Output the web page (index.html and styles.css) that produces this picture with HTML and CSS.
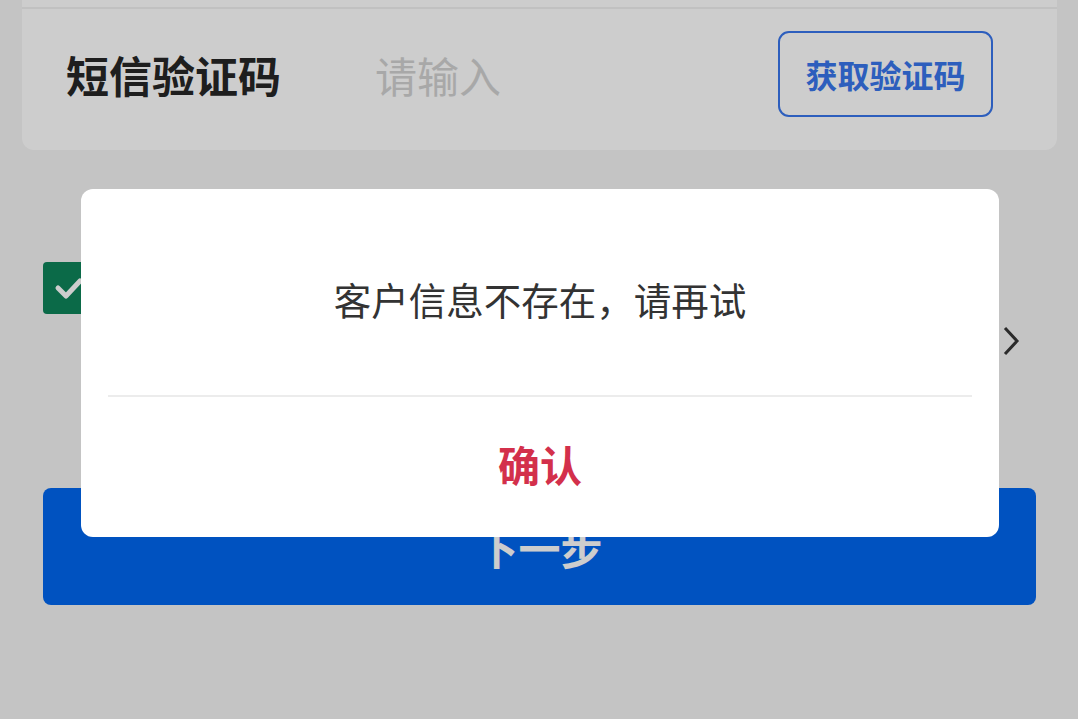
FILE: index.html
```html
<!DOCTYPE html>
<html lang="zh-CN">
<head>
    <meta charset="UTF-8">
    <meta name="viewport" content="width=device-width, initial-scale=1.0">
    <title>短信验证</title>
    <link rel="stylesheet" href="styles.css">
</head>
<body>
    <div class="page">
        <div class="form-card">
            <div class="form-row form-row-prev"></div>
            <div class="form-row sms-row">
                <label class="field-label" for="sms-code">短信验证码</label>
                <input id="sms-code" class="field-input" type="text" placeholder="请输入">
                <button class="code-btn">获取验证码</button>
            </div>
        </div>

        <div class="agree-row">
            <span class="agree-check">
                <svg width="30" height="24" viewBox="0 0 30 24">
                    <polyline points="4,12 12,20 26,5" fill="none" stroke="#fff" stroke-width="5" stroke-linecap="round" stroke-linejoin="round"/>
                </svg>
            </span>
            <span class="agree-text"></span>
            <svg class="agree-arrow" width="18" height="30" viewBox="0 0 18 30">
                <polyline points="3,2 15,15 3,28" fill="none" stroke="#363636" stroke-width="3"/>
            </svg>
        </div>

        <button class="next-btn">下一步</button>
    </div>

    <!-- alert dialog -->
    <div class="mask"></div>
    <div class="dialog">
        <div class="dialog-msg">客户信息不存在，请再试</div>
        <div class="dialog-line"></div>
        <button class="dialog-ok">确认</button>
    </div>
</body>
</html>
```

FILE: styles.css
```css
body {
    margin: 0;
    background-color: #f4f4f4;
    font-family: "Noto Sans CJK SC", "Noto Sans", sans-serif;
    height: 719px;
    overflow: hidden;
}

.page {
    padding: 0 21px 0 22px;
}

.form-card {
    background-color: #fff;
    border-radius: 0 0 12px 12px;
}

.form-row-prev {
    height: 7px;
    border-bottom: 2px solid #f0f0f0;
}

.sms-row {
    display: flex;
    align-items: center;
    padding: 22px 64px 33px 44px;
}

.field-label {
    width: 309px;
    font-size: 43px;
    font-weight: bold;
    color: #262626;
}

.field-input {
    flex: 1;
    min-width: 0;
    border: none;
    outline: none;
    background: transparent;
    padding: 0;
    font-family: inherit;
    font-size: 42px;
    color: #262626;
}

.field-input::placeholder {
    color: #d2d2d2;
}

.code-btn {
    width: 215px;
    height: 86px;
    border: 2px solid #3976eb;
    border-radius: 11px;
    background: transparent;
    color: #3976eb;
    font-family: inherit;
    font-size: 32px;
    font-weight: bold;
    padding: 0;
}

.agree-row {
    display: flex;
    align-items: flex-start;
    padding: 112px 37px 0 21px;
    height: 338px;
    box-sizing: border-box;
}

.agree-check {
    width: 52px;
    height: 52px;
    border-radius: 4px;
    background-color: #0e845a;
    display: flex;
    align-items: center;
    justify-content: center;
    flex-shrink: 0;
}

.agree-text {
    flex: 1;
}

.agree-arrow {
    margin-top: 64px;
}

.next-btn {
    display: block;
    width: calc(100% - 42px);
    height: 117px;
    margin: 0 auto;
    border: none;
    border-radius: 8px;
    background-color: #0066ef;
    color: #fff;
    font-family: inherit;
    font-size: 42px;
    font-weight: bold;
}

.mask {
    position: fixed;
    inset: 0;
    background-color: rgba(0, 0, 0, 0.196);
}

.dialog {
    position: fixed;
    left: 81px;
    top: 189px;
    width: 918px;
    height: 348px;
    background-color: #fff;
    border-radius: 12px;
    display: flex;
    flex-direction: column;
}

.dialog-msg {
    height: 206px;
    box-sizing: border-box;
    padding-top: 12px;
    display: flex;
    align-items: center;
    justify-content: center;
    font-size: 37.5px;
    color: #333;
}

.dialog-line {
    height: 2px;
    margin: 0 27px;
    background-color: #ececec;
}

.dialog-ok {
    flex: 1;
    border: none;
    background: transparent;
    color: #d3304b;
    font-family: inherit;
    font-size: 42px;
    font-weight: bold;
    padding: 0 0 8px;
}
```
